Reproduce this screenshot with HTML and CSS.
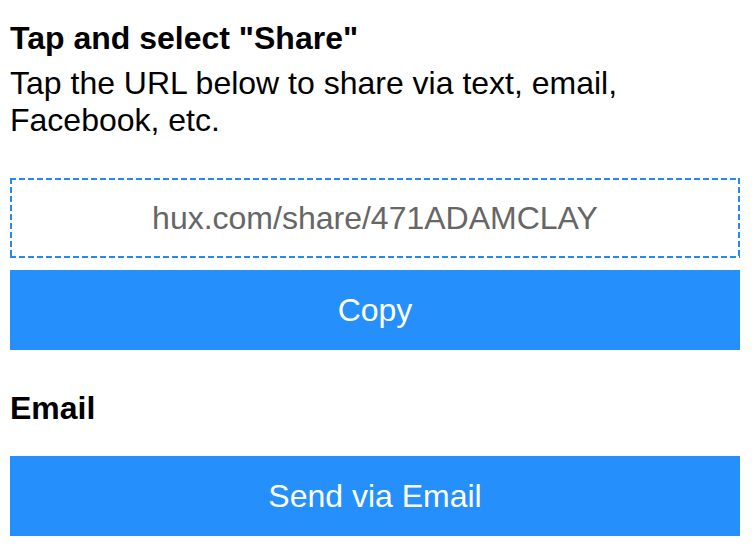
FILE: index.html
```html
<!DOCTYPE html>
<html lang="en">
<head>
<meta charset="utf-8">
<title>Share</title>
<link rel="stylesheet" href="styles.css">
</head>
<body>
<main class="page">
  <section class="share">
    <h1 class="title">Tap and select "Share"</h1>
    <p class="desc">Tap the URL below to share via text, email, Facebook, etc.</p>
    <div class="url-box">hux.com/share/471ADAMCLAY</div>
    <button class="btn btn-copy" type="button">Copy</button>
  </section>
  <section class="email">
    <h2 class="title">Email</h2>
    <button class="btn btn-send" type="button">Send via Email</button>
  </section>
</main>
</body>
</html>
```

FILE: styles.css
```css
html, body {
  margin: 0;
  padding: 0;
  background: #ffffff;
}

body {
  font-family: "Liberation Sans", Arial, Helvetica, sans-serif;
  font-size: 32px;
  color: #000000;
}

.page {
  padding: 0 14px 0 10px;
  display: flex;
  flex-direction: column;
}

.share,
.email {
  display: flex;
  flex-direction: column;
}

.title {
  margin: 0;
  font-size: 32px;
  font-weight: 700;
  line-height: 38px;
}

.share .title {
  margin-top: 19px;
}

.desc {
  margin: 8px 0 0;
  line-height: 37px;
}

.url-box {
  margin-top: 39px;
  height: 80px;
  box-sizing: border-box;
  background:
    repeating-linear-gradient(90deg, #2389f6 0 6px, transparent 6px 9px) left top / 100% 2px no-repeat,
    repeating-linear-gradient(90deg, #2389f6 0 6px, transparent 6px 9px) left bottom / 100% 2px no-repeat,
    repeating-linear-gradient(180deg, #2389f6 0 6px, transparent 6px 9px) left top / 2px 100% no-repeat,
    repeating-linear-gradient(180deg, #2389f6 0 6px, transparent 6px 9px) right top / 2px 100% no-repeat;
  display: flex;
  align-items: center;
  justify-content: center;
  color: #666666;
}

.btn {
  display: flex;
  align-items: center;
  justify-content: center;
  height: 80px;
  border: 0;
  padding: 0;
  background: #258ffb;
  color: #ffffff;
  font-family: inherit;
  font-size: 32px;
  cursor: pointer;
}

.btn-copy {
  margin-top: 12px;
}

.email .title {
  margin-top: 39px;
}

.btn-send {
  margin-top: 29px;
}
```
